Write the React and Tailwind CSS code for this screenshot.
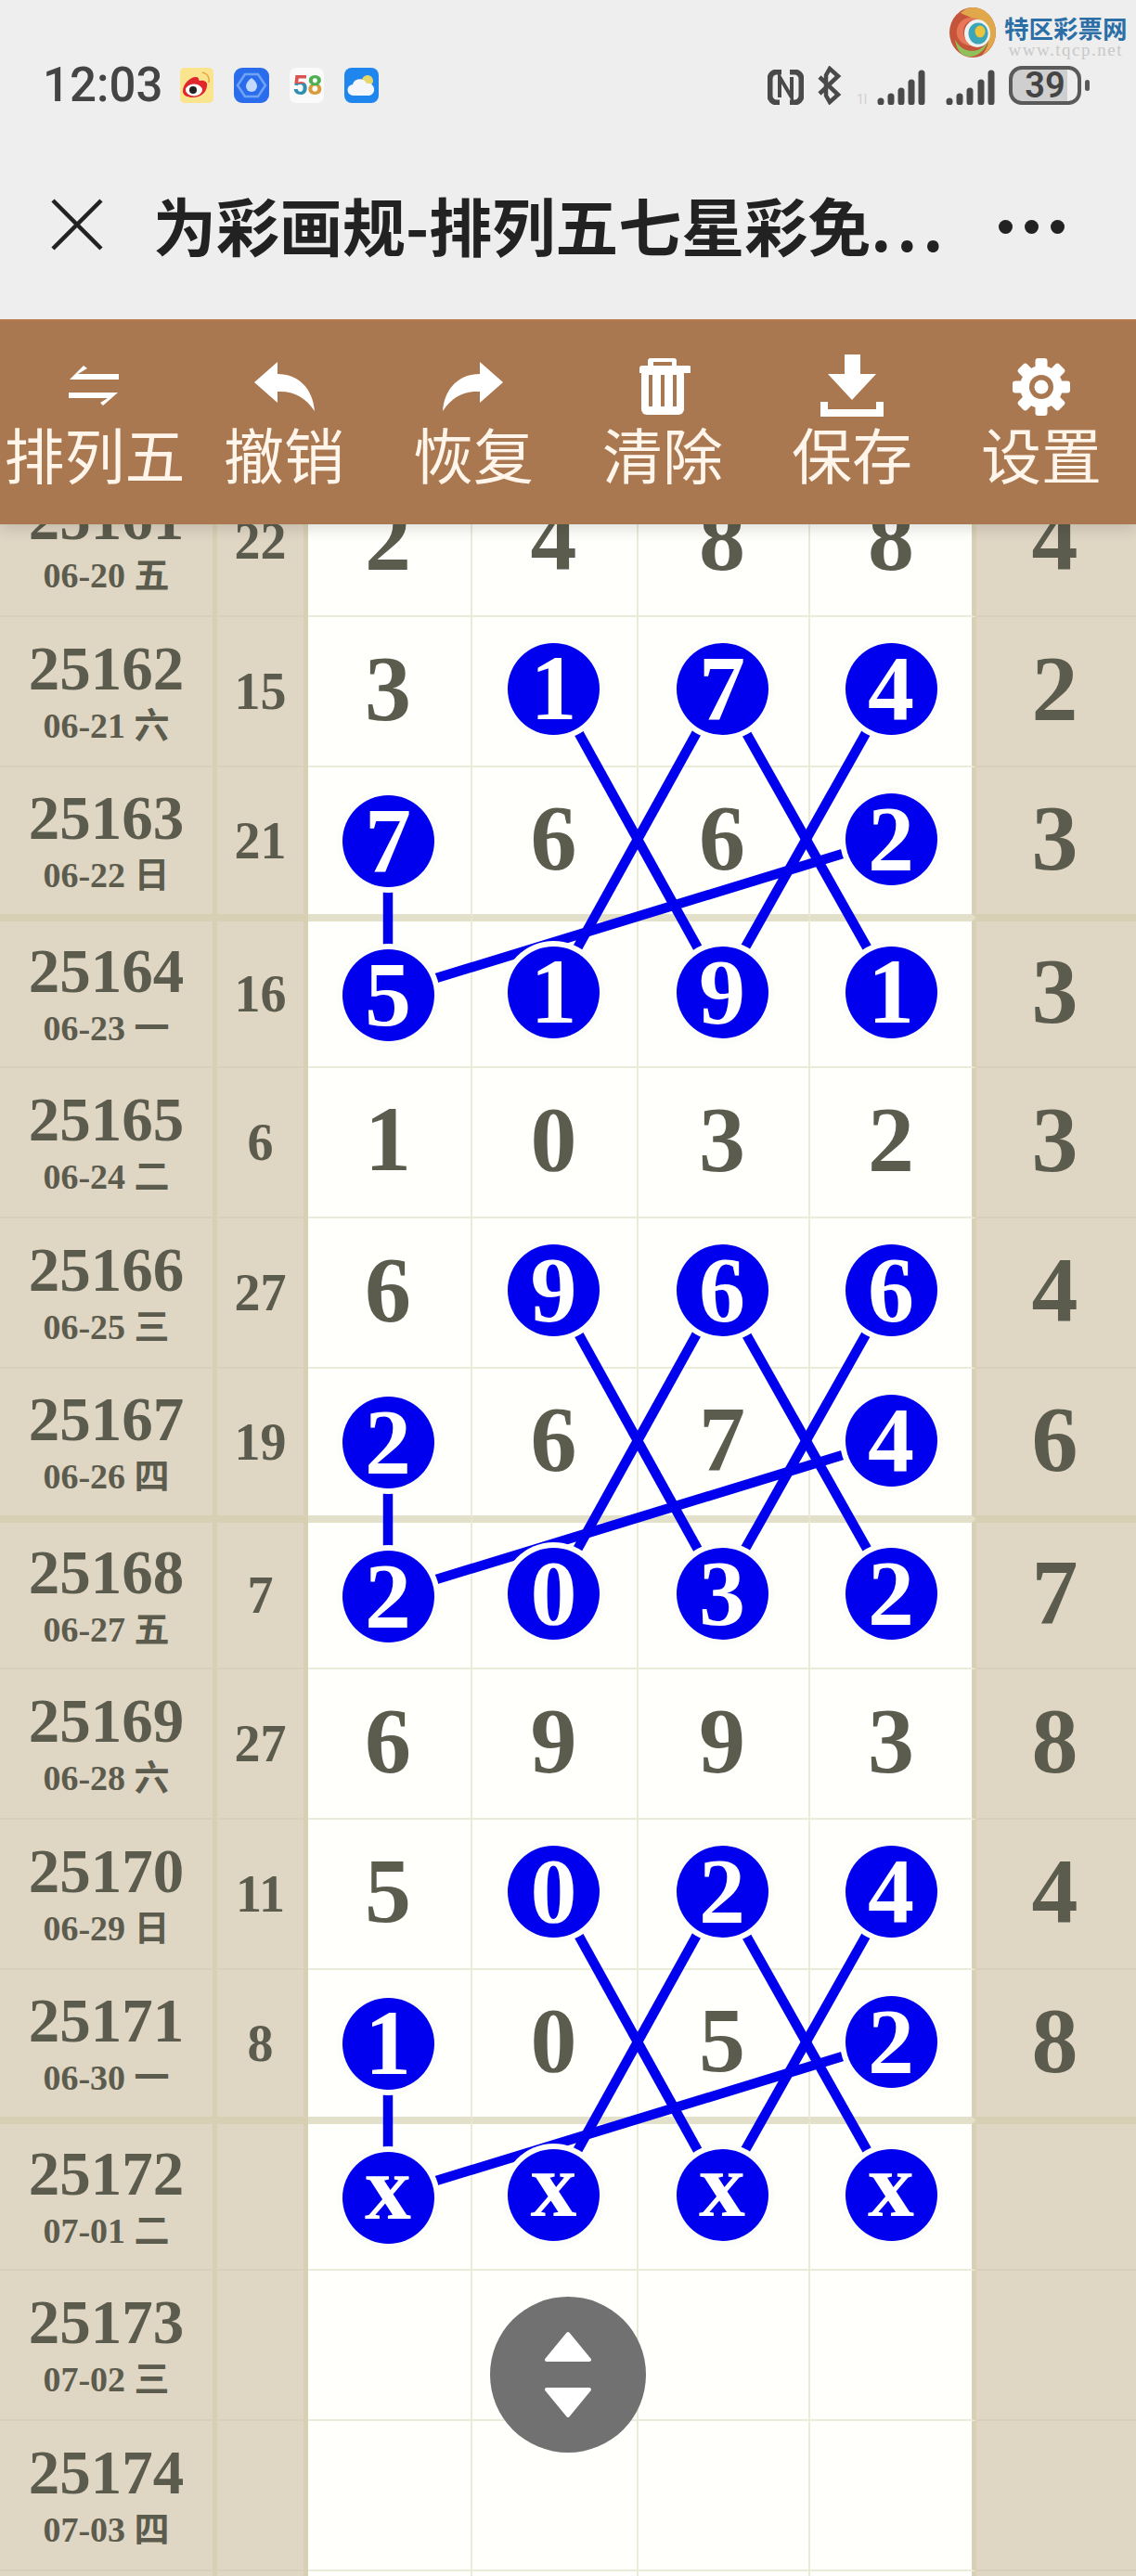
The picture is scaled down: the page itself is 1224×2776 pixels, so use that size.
const rows = [
  { no: '25161', date: '06-20', day: '五', sum: '22', nums: ['2', '4', '8', '8'], last: '4' },
  { no: '25162', date: '06-21', day: '六', sum: '15', nums: ['3', '1', '7', '4'], hit: [1, 2, 3], last: '2' },
  { no: '25163', date: '06-22', day: '日', sum: '21', nums: ['7', '6', '6', '2'], hit: [0, 3], last: '3', thickBottom: true },
  { no: '25164', date: '06-23', day: '一', sum: '16', nums: ['5', '1', '9', '1'], hit: [0, 1, 2, 3], last: '3', thickTop: true },
  { no: '25165', date: '06-24', day: '二', sum: '6', nums: ['1', '0', '3', '2'], last: '3' },
  { no: '25166', date: '06-25', day: '三', sum: '27', nums: ['6', '9', '6', '6'], hit: [1, 2, 3], last: '4' },
  { no: '25167', date: '06-26', day: '四', sum: '19', nums: ['2', '6', '7', '4'], hit: [0, 3], last: '6', thickBottom: true },
  { no: '25168', date: '06-27', day: '五', sum: '7', nums: ['2', '0', '3', '2'], hit: [0, 1, 2, 3], last: '7', thickTop: true },
  { no: '25169', date: '06-28', day: '六', sum: '27', nums: ['6', '9', '9', '3'], last: '8' },
  { no: '25170', date: '06-29', day: '日', sum: '11', nums: ['5', '0', '2', '4'], hit: [1, 2, 3], last: '4' },
  { no: '25171', date: '06-30', day: '一', sum: '8', nums: ['1', '0', '5', '2'], hit: [0, 3], last: '8', thickBottom: true },
  { no: '25172', date: '07-01', day: '二', sum: '', nums: ['x', 'x', 'x', 'x'], hit: [0, 1, 2, 3], last: '', thickTop: true },
  { no: '25173', date: '07-02', day: '三', sum: '', nums: ['', '', '', ''], last: '' },
  { no: '25174', date: '07-03', day: '四', sum: '', nums: ['', '', '', ''], last: '' },
  { no: '', date: '', day: '', sum: '', nums: ['', '', '', ''], last: '' },
]

const colX = [418, 597, 777, 960]
const groups = [1070, 1718, 2366]

const serif = "font-['Liberation_Serif','Noto_Sans_CJK_SC',serif]"

const rowBorder = (row, beige) => {
  if (row.thickTop) return beige ? 'border-t-4 border-b-2 border-t-[#d8d0b4] border-b-[#d9cfbc]' : 'border-t-4 border-b-2 border-t-[#e2e0c8] border-b-[#ebebd9]'
  if (row.thickBottom) return beige ? 'border-b-4 border-b-[#d8d0b4]' : 'border-b-4 border-b-[#e2e0c8]'
  return beige ? 'border-b-2 border-b-[#d9cfbc]' : 'border-b-2 border-b-[#ebebd9]'
}

const Lines = () => (
  <svg className="absolute left-0 top-0 z-10" width="1224" height="2300" viewBox="0 503 1224 2300">
    {groups.map((c) => (
      <g key={c} stroke="#0000ee" strokeWidth="10.500">
        <line x1={colX[0]} y1={c - 164} x2={colX[0]} y2={c} />
        <line x1={colX[1]} y1={c - 328} x2={colX[2]} y2={c - 3} />
        <line x1={colX[2]} y1={c - 328} x2={colX[1]} y2={c - 3} />
        <line x1={colX[2]} y1={c - 328} x2={colX[3]} y2={c - 3} />
        <line x1={colX[3]} y1={c - 328} x2={colX[2]} y2={c - 3} />
        <line x1={colX[3]} y1={c - 166} x2={colX[0]} y2={c} />
      </g>
    ))}
  </svg>
)

const NumCell = ({ row, i, border }) => {
  const value = row.nums[i]
  const hit = row.hit && row.hit.includes(i)
  return (
    <div className={`flex items-center justify-center bg-[#fffffc] ${rowBorder(row, false)} ${border}`}>
      {hit ? (
        <div className={`relative z-20 flex h-[99px] w-[99px] items-center justify-center rounded-full bg-[#0000ee] text-white shadow-[0_0_0_6px_#fcfcf8] ${row.thickTop && i === 0 ? 'translate-y-[3px]' : ''} ${row.thickBottom && i === 0 ? 'translate-y-[2px]' : ''} ${row.thickTop || row.thickBottom ? '-mt-[4px]' : '-mt-[6px]'}`}>
          <span className={`text-[100px] font-bold leading-none ${value === 'x' ? '-mt-[20px]' : ''}`}>{value}</span>
        </div>
      ) : (
        <span className="-mt-[6px] text-[100px] font-bold leading-none">{value}</span>
      )}
    </div>
  )
}

const TableRow = ({ row }) => (
  <div className={`grid h-[162px] grid-cols-[234px_98px_177px_179px_185px_179px_172px] text-[#5c5c4e] ${serif}`}>
    <div className={`flex flex-col items-center justify-center bg-[#e0d6c4] border-r-[5px] border-r-[#d8d0b4] ${rowBorder(row, true)}`}>
      <span className="text-[67px] font-bold leading-[74px]">{row.no}</span>
      <span className="text-[38px] font-bold leading-[50px]">{row.date} {row.day}</span>
    </div>
    <div className={`flex items-center justify-center bg-[#e0d6c4] border-r-[5px] border-r-[#d8d0b4] ${rowBorder(row, true)}`}>
      <span className="text-[56px] font-bold leading-none">{row.sum}</span>
    </div>
    <NumCell row={row} i={0} border="border-r-2 border-r-[#ebebd9] pr-[3px]" />
    <NumCell row={row} i={1} border="border-r-2 border-r-[#ebebd9] pr-[2px]" />
    <NumCell row={row} i={2} border="border-r-2 border-r-[#ebebd9] pr-[3px]" />
    <NumCell row={row} i={3} border="border-r-[5px] border-r-[#d8d0b4]" />
    <div className={`flex items-center justify-center bg-[#e0d6c4] pr-[3px] ${rowBorder(row, true)}`}>
      <span className="-mt-[6px] text-[100px] font-bold leading-none">{row.last}</span>
    </div>
  </div>
)

const AppIcons = () => (
  <div className="ml-[19px] flex items-center gap-[22px]">
    <svg width="36" height="38" viewBox="0 0 36 38">
      <rect width="36" height="38" rx="5" fill="#fbe48e" />
      <path d="M3 25c0-8 9-16 15-15 3 1 2 4 3 4 5-1 9 1 8 6-1 8-8 12-15 12C8 32 3 30 3 25z" fill="#e0272b" />
      <ellipse cx="15" cy="24" rx="9" ry="6.500" fill="#fff" />
      <circle cx="14" cy="24" r="4" fill="#222" />
      <path d="M24 5c5 1 8 5 7 11" fill="none" stroke="#e8a23a" strokeWidth="1.500" />
    </svg>
    <svg width="38" height="38" viewBox="0 0 38 38">
      <rect width="38" height="38" rx="9" fill="#2a6cec" />
      <path d="M12 7h14l8 12-8 12H12L4 19z" fill="none" stroke="#6fa4f5" strokeWidth="2.500" />
      <path d="M19 11c4 3 6 6 6 9a6 6 0 0 1-12 0c0-3 2-6 6-9z" fill="#c3d9fb" />
    </svg>
    <div className="flex h-[38px] w-[37px] items-center justify-center rounded-[7px] bg-[#fafafa] font-['Roboto',sans-serif] text-[29px] font-bold leading-none tracking-[-1px]">
      <span className="bg-[linear-gradient(180deg,#d9534f_40%,#2f8fb0_40%)] bg-clip-text text-transparent">5</span>
      <span className="bg-[linear-gradient(180deg,#4caf50_50%,#d99a3a_50%)] bg-clip-text text-transparent">8</span>
    </div>
    <svg width="37" height="38" viewBox="0 0 37 38">
      <rect width="37" height="38" rx="8" fill="#1f86ee" />
      <circle cx="25" cy="14" r="6" fill="#e5d66a" />
      <path d="M10 30a6 6 0 0 1-1-12 8 8 0 0 1 15-1 6.500 6.500 0 0 1 3 13z" fill="#f3f7fb" />
    </svg>
  </div>
)

const StatusRight = () => (
  <div className="flex items-end">
    <svg width="39" height="38" viewBox="0 0 39 38">
      <path d="M15 2.500H10a7.500 7.500 0 0 0-7.500 7.500v18a7.500 7.500 0 0 0 7.500 7.500h3M24 2.500h5a7.500 7.500 0 0 1 7.500 7.500v18a7.500 7.500 0 0 1-7.500 7.500h-5" fill="none" stroke="#4a4a4a" strokeWidth="6" />
      <path d="M13 30V8l13 22V8" fill="none" stroke="#4a4a4a" strokeWidth="4" />
    </svg>
    <svg className="ml-[14px]" width="27" height="42" viewBox="0 0 27 42">
      <path d="M3 30 23 11 14 3 10 10v22l4 7 9-8L3 12" fill="none" stroke="#4a4a4a" strokeWidth="4.500" />
    </svg>
    <svg className="ml-[16px]" width="74" height="38" viewBox="0 0 74 38">
      <text x="0" y="37" fontSize="14" fill="#d0d0d0" fontFamily="Roboto, sans-serif">1l</text>
      <g stroke="#4a4a4a" strokeWidth="7" strokeLinecap="round">
        <line x1="26" y1="34" x2="26" y2="35" />
        <line x1="37" y1="29" x2="37" y2="35" />
        <line x1="48" y1="23" x2="48" y2="35" />
        <line x1="59" y1="14" x2="59" y2="35" />
        <line x1="70" y1="4" x2="70" y2="35" />
      </g>
    </svg>
    <svg className="ml-[22px]" width="54" height="38" viewBox="0 0 54 38">
      <g stroke="#4a4a4a" strokeWidth="7" strokeLinecap="round">
        <line x1="4" y1="34" x2="4" y2="35" />
        <line x1="15" y1="29" x2="15" y2="35" />
        <line x1="26" y1="23" x2="26" y2="35" />
        <line x1="38" y1="14" x2="38" y2="35" />
        <line x1="49" y1="4" x2="49" y2="35" />
      </g>
    </svg>
    <div className="ml-[14px] flex h-[42px] w-[78px] items-center justify-center rounded-[14px] border-[4px] border-[#5a5a5a] bg-[linear-gradient(90deg,#cfcfcf_85%,#eeeeee_85%)] font-['Roboto',sans-serif] text-[38px] font-semibold leading-none text-[#444]">
      39
    </div>
    <div className="mb-[15px] ml-[4px] h-[12px] w-[5px] rounded-full bg-[#5a5a5a]" />
  </div>
)

const Watermark = () => (
  <div className="absolute left-[1023px] top-[8px] flex items-start gap-[9px]">
    <svg width="50" height="54" viewBox="0 0 50 54">
      <ellipse cx="25" cy="27" rx="25" ry="27" fill="#c4553a" />
      <path d="M25 0c14 0 25 12 25 27 0 10-6 20-15 24 7-7 9-17 4-26C34 14 20 10 12 6c4-4 8-6 13-6z" fill="#e0a84a" />
      <path d="M6 34c4 10 14 15 24 12 8-3 12-9 12-15 0 12-10 23-22 22C12 52 7 44 6 34z" fill="#8fc05a" />
      <path d="M8 24C10 12 22 8 32 13c-8-1-16 3-17 12-1 8 5 15 14 15-11 4-23-4-21-16z" fill="#e8775a" />
      <ellipse cx="30" cy="28" rx="14" ry="15" fill="#eef1ef" />
      <ellipse cx="31" cy="28" rx="10.500" ry="11.500" fill="#3aa6b8" />
      <ellipse cx="33" cy="26" rx="5.500" ry="6.500" fill="#eec43c" />
    </svg>
    <div className="flex flex-col items-center">
      <span className="mt-[7px] font-['Noto_Sans_CJK_SC',sans-serif] text-[26.500px] font-bold leading-[30px] text-[#2c6ea6]">特区彩票网</span>
      <span className="font-['Liberation_Serif',serif] text-[19px] leading-[18px] tracking-[1.500px] text-[#c9c9c9]">www.tqcp.net</span>
    </div>
  </div>
)

const icons = {
  swap: (
    <svg width="60" height="60" viewBox="0 0 60 60" fill="#fff" className="-ml-[4px] mt-[3px]">
      <path d="M5 20 20 5l4 3-10 6h44v6z" />
      <path d="M4 34h53L41 48l-3-3 8-5H4z" />
    </svg>
  ),
  undo: (
    <svg width="70" height="60" viewBox="0 0 70 60" fill="#fff">
      <path d="M3 25 28 3v13c22 0 38 15 40 40-10-15-23-22-40-21v12z" />
    </svg>
  ),
  redo: (
    <svg width="70" height="60" viewBox="0 0 70 60" fill="#fff">
      <path d="M67 25 42 3v13C20 16 4 31 2 56c10-15 23-22 40-21v12z" />
    </svg>
  ),
  trash: (
    <svg width="60" height="62" viewBox="0 0 60 62" fill="#fff">
      <path d="M18 0h24a3 3 0 0 1 3 3v5h13a3 3 0 0 1 3 3v5H5v-5a3 3 0 0 1 3-3h6V3a3 3 0 0 1 4-3zm2 4v4h20V4z" />
      <path d="M7 16h46v39a6 6 0 0 1-6 6H13a6 6 0 0 1-6-6z" />
      <rect x="15" y="18" width="4" height="34" fill="#aa7850" />
      <rect x="28" y="18" width="4" height="34" fill="#aa7850" />
      <rect x="41" y="18" width="4" height="34" fill="#aa7850" />
    </svg>
  ),
  save: (
    <svg width="70" height="68" viewBox="0 0 70 68" fill="#fff" className="-mt-[2px]">
      <path d="M27 0h17v21h17L35 49 9 21h18z" />
      <path d="M1 51h8v8h52v-8h8v16H1z" />
    </svg>
  ),
  gear: (
    <svg width="62" height="62" viewBox="-31 -31 62 62" fill="#fff">
      <circle r="23" />
      {[0, 45, 90, 135, 180, 225, 270, 315].map((a) => (
        <rect key={a} x="-6.500" y="-31" width="13" height="14" rx="3" transform={`rotate(${a})`} />
      ))}
      <circle r="13" fill="#aa7850" />
      <circle r="7.500" />
    </svg>
  ),
}

const tools = [
  { label: '排列五', icon: icons.swap },
  { label: '撤销', icon: icons.undo },
  { label: '恢复', icon: icons.redo },
  { label: '清除', icon: icons.trash },
  { label: '保存', icon: icons.save },
  { label: '设置', icon: icons.gear },
]

const App = () => {
  return (
    <div className="relative h-[2776px] w-[1224px] overflow-hidden bg-white font-['Noto_Sans_CJK_SC',sans-serif]">
      <div className="relative z-30 shadow-[0_6px_14px_rgba(0,0,0,0.12)]">
        <div className="relative h-[344px] bg-[#eeeeee]">
          <Watermark />
          <div className="flex items-center justify-between pl-[46px] pr-[50px] pt-[70px]">
            <div className="flex items-center">
              <span className="font-['Roboto',sans-serif] text-[51px] font-medium leading-[44px] text-[#444]">12:03</span>
              <AppIcons />
            </div>
            <StatusRight />
          </div>
          <div className="mt-[86px] flex items-center pl-[54px] pr-[77px] pt-[6px]">
            <svg width="58" height="58" viewBox="0 0 58 58">
              <path d="M3 3 55 55M55 3 3 55" stroke="#222" strokeWidth="4.500" fill="none" />
            </svg>
            <span className="ml-[53px] text-[68px] font-semibold leading-[72px] text-[#222]">为彩画规-排列五七星彩免<span className="tracking-[6px]">...</span></span>
            <div className="ml-auto mt-[4px] flex gap-[13px]">
              <div className="h-[15px] w-[15px] rounded-full bg-[#222]" />
              <div className="h-[15px] w-[15px] rounded-full bg-[#222]" />
              <div className="h-[15px] w-[15px] rounded-full bg-[#222]" />
            </div>
          </div>
        </div>
        <div className="grid h-[221px] grid-cols-6 border-t-2 border-t-[#b87a4c] bg-[#aa7850]">
          {tools.map((t) => (
            <div key={t.label} className="flex flex-col items-center">
              <div className="mt-[36px] flex h-[70px] items-center justify-center">{t.icon}</div>
              <span className="text-[65px] leading-[72px] text-[#fff5ea]">{t.label}</span>
            </div>
          ))}
        </div>
      </div>
      <div className="relative -mt-[62px]">
        <Lines />
        {rows.map((row, i) => (
          <TableRow key={i} row={row} />
        ))}
      </div>
      <div className="absolute left-[528px] top-[2475px] z-40 flex h-[168px] w-[168px] items-center justify-center rounded-full bg-[#717171]">
        <svg width="56" height="96" viewBox="0 0 56 96" fill="#fff" stroke="#fff" strokeWidth="4" strokeLinejoin="round">
          <path d="M28 4 51 32H5z" />
          <path d="M28 92 51 64H5z" />
        </svg>
      </div>
    </div>
  )
}

export default App
